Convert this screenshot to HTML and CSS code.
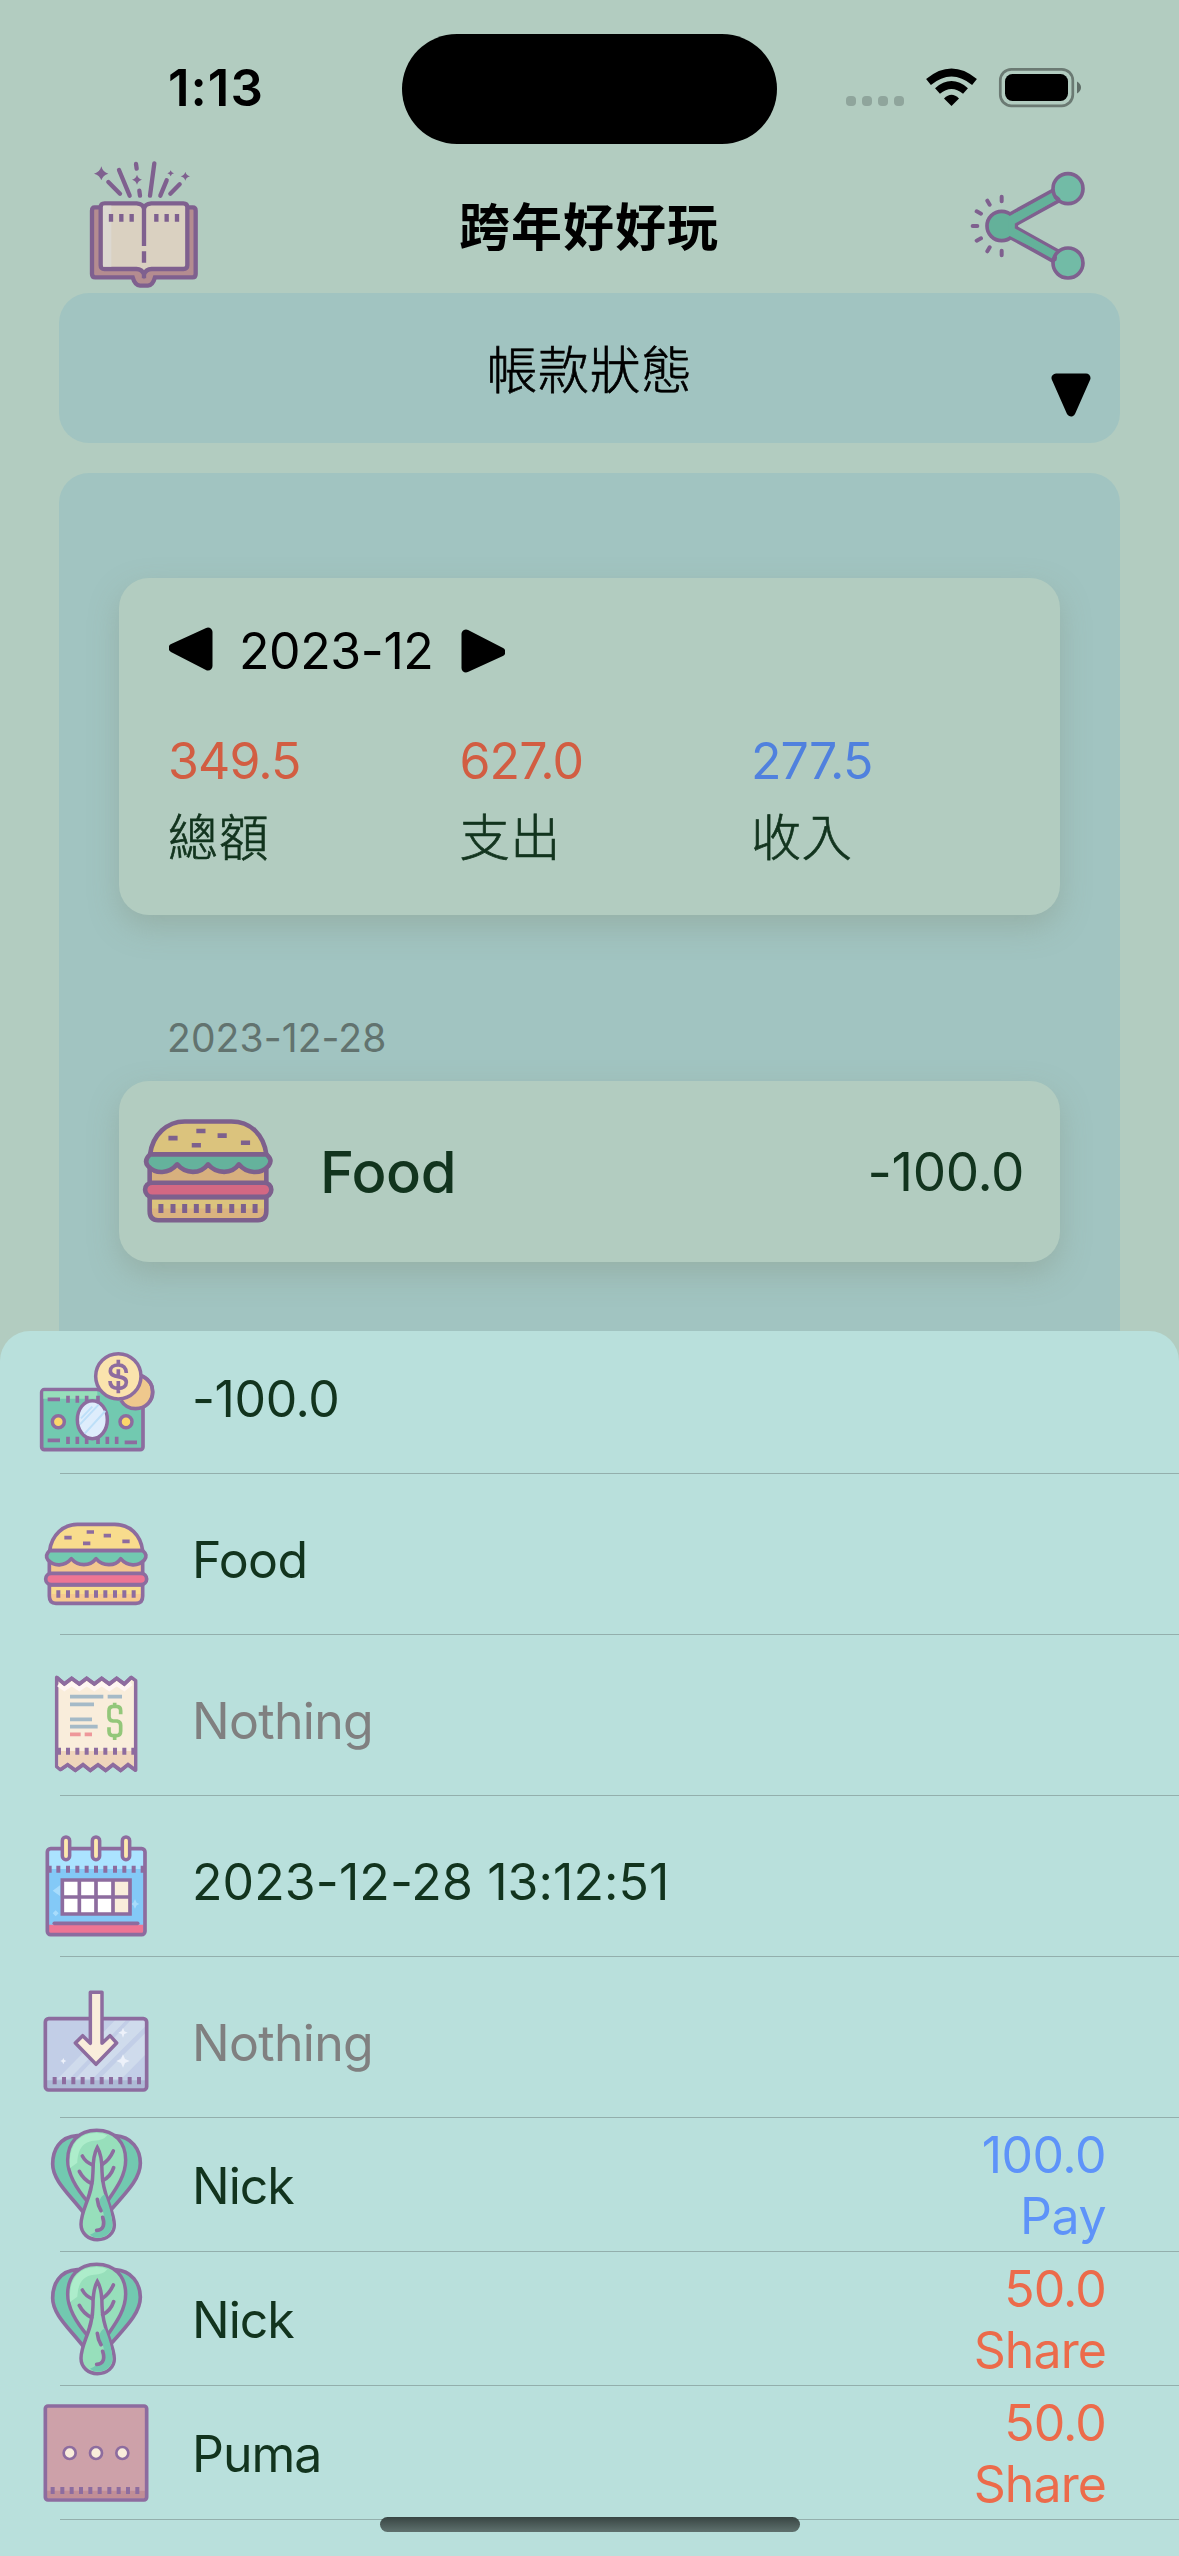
FILE: index.html
```html
<!DOCTYPE html>
<html lang="zh-Hant">
<head>
<meta charset="utf-8">
<title>跨年好好玩</title>
<link rel="stylesheet" href="styles.css">
</head>
<body>
<svg class="defs" aria-hidden="true">
  <symbol id="burger" viewBox="48 522 360 360">
    <path class="bun" d="M89 662C95 615 130 583 172 583H284C330 583 362 615 368 662Z"/>
    <path class="bread" d="M88 690H368V730H88Z"/>
    <path class="bread2" d="M88 765H368V798Q368 820 348 820H108Q88 820 88 798Z"/>
    <path class="bun" d="M94 769H363V792H94Z" stroke="none"/>
    <path class="line" d="M88 765H368V798Q368 820 348 820H108Q88 820 88 798ZM88 690V730M368 690V730"/>
    <path class="leaf" d="M89 662H368Q385 675 373 690C355 710 322 710 302 686C286 710 248 710 228 686C210 710 174 710 154 686C134 710 102 710 84 690Q73 677 89 662Z"/>
    <rect class="patty" x="77" y="730" width="303" height="34" rx="17"/>
    <path class="line" d="M133 623H155M200 606H222M251 617H273M189 640H211M307 634H329"/>
    <path class="line ticks" d="M115 781V803M144 781V803M172 781V803M200 781V803M228 781V803M256 781V803M285 781V803M313 781V803M341 781V803"/>
  </symbol>
  <symbol id="bokchoy" viewBox="48 495 360 360">
    <path class="leaf" d="M172 527C118 530 98 572 98 612C98 660 145 700 190 757L232 800L270 753C316 700 361 658 361 610C361 568 335 530 285 527Z"/>
    <path class="mint" d="M230 511C175 511 143 548 143 600C143 645 172 690 207 730H258C285 690 317 650 317 600C317 548 285 511 230 511Z"/>
    <path class="shine" d="M150 624C146 570 164 520 230 519Q248 519 262 526Q250 542 222 542C180 546 174 580 172 608Z"/>
    <path class="mint" d="M232 562C222 580 219 604 219 634C219 710 183 745 183 793C183 820 205 839 232 839C261 839 283 820 283 795C283 748 246 708 246 634C246 604 243 580 232 562Z"/>
    <path class="teal" d="M254 703Q225 720 250 758Q262 800 210 824Q220 834 235 833C260 833 277 815 277 795C277 765 265 730 254 703Z"/>
    <path class="line round" d="M187 588Q197 607 217 614M178 634Q190 658 215 671M280 573Q268 600 247 613M281 623Q272 650 248 662M232 718Q234 738 243 752M248 772C254 790 253 810 230 811"/>
  </symbol>
</svg>

<div class="screen">
  <header class="status">
    <span class="time">1:13</span>
    <span class="island"></span>
    <svg class="indicators" viewBox="0 0 240 42" width="240" height="42">
      <g fill="#8fa59c"><rect x="0" y="29" width="10" height="10" rx="4"/><rect x="16" y="29" width="10" height="10" rx="4"/><rect x="32" y="29" width="10" height="10" rx="4"/><rect x="48" y="29" width="10" height="10" rx="4"/></g>
      <g fill="none" stroke="#000" stroke-width="7.500"><path d="M82.500 15Q105.500 -4 128.500 15"/><path d="M91.500 24Q105.500 12 119.500 24"/></g>
      <path d="M98 31.500Q105.500 24 113 31.500L105.500 39Z"/>
      <rect x="154.300" y="2.300" width="72.500" height="36.500" rx="11" fill="none" stroke="#6b7a73" stroke-width="2.700"/>
      <rect x="159" y="7" width="63" height="27" rx="7.500"/>
      <path d="M231 14.500Q235 17 235 20.500T231 26.500Z" fill="#5f6d67"/>
    </svg>
  </header>

  <nav class="navbar">
    <svg class="book" viewBox="0 0 540 480" width="180" height="160">
      <path class="cover" d="M122 202H104Q96 202 96 212V402Q96 412 106 412H218Q225 436 240 437H264Q278 436 285 412H398Q407 412 407 402V212Q407 202 398 202H382Z"/>
      <path class="page" d="M122 202Q122 190 134 190H230Q250 192 252 206Q254 192 274 190H370Q382 190 382 202V376Q382 387 370 387H275Q258 388 252 402Q246 388 229 387H134Q122 387 122 376Z"/>
      <path d="M129 197H154V380H129Z" fill="#dcd8d1"/>
      <path class="line" d="M252 206V318M252 334V368M252 395V415"/>
      <path class="line ticks" d="M153 222V245M184 222V245M215 222V245M289 222V245M320 222V245M351 222V245"/>
      <path class="line round" d="M145 126L180 161M177 90L209 167M228 72L230 86M283 70L270 167M238 152L240 167M320 121L301 167M359 133L331 161"/>
      <path class="spark" d="M124 79Q128 96 145 101Q128 106 124 121Q120 106 102 101Q120 96 124 79ZM231 104Q234 116 246 119Q234 122 231 134Q228 122 216 119Q228 116 231 104ZM332 91Q334 98 342 100Q334 102 332 109Q330 102 322 100Q330 98 332 91ZM376 95Q379 106 390 109Q379 112 376 122Q373 112 362 109Q373 106 376 95Z"/>
    </svg>
    <h1 class="title">跨年好好玩</h1>
    <svg class="share" viewBox="420 360 420 390" width="140" height="130">
      <path class="link" d="M570 522L700 450L718 482L588 553V563L720 636L700 664L570 592Z"/>
      <circle class="node" cx="545" cy="558" r="44"/>
      <path fill="#64b19a" d="M565 530L700 459L712 478L584 551V565L712 637L704 655L565 586Z"/>
      <circle class="node2" cx="744" cy="446" r="45"/><circle class="node2" cx="744" cy="669" r="45"/>
      <path class="line round" d="M545 470V484M502 482L509 494M470 514L483 521M458 558H472M470 602L483 595M502 634L509 622M545 632V646M708 472L715 478M705 652L704 658"/>
    </svg>
  </nav>

  <main class="page-body">
    <section class="selector">
      <span class="selector-name">帳款狀態</span>
      <svg class="caret" viewBox="0 0 40 44" width="40" height="44"><path class="tri" d="M5 5H35L20 39Z"/></svg>
    </section>
    <section class="ledger">
      <article class="summary">
        <div class="month">
          <svg class="prev" viewBox="0 0 44 44" width="44" height="44"><path class="tri" d="M39 5V39L4 21Z"/></svg>
          <span class="month-name">2023-12</span>
          <svg class="next" viewBox="0 0 44 44" width="44" height="44"><path class="tri" d="M5 5V39L40 23Z"/></svg>
        </div>
        <div class="totals">
          <div><b class="out">349.5</b><span>總額</span></div>
          <div><b class="out">627.0</b><span>支出</span></div>
          <div><b class="in">277.5</b><span>收入</span></div>
        </div>
      </article>
      <div class="date">2023-12-28</div>
      <article class="entry">
        <svg class="entry-icon" width="150" height="150"><use href="#burger"/></svg>
        <span class="entry-name">Food</span>
        <span class="entry-amount">-100.0</span>
      </article>
    </section>
  </main>

  <section class="sheet">
    <div class="row first">
      <svg class="icon" viewBox="48 39 360 360">
        <circle cx="347" cy="185" r="51" fill="#efc88d" stroke="#8d6c9f" stroke-width="10.500"/>
        <rect class="leaf" x="65" y="179" width="304" height="180" rx="8"/>
        <path d="M70 184H232V206H70Z" fill="#97dfbb"/>
        <path class="line" d="M83 208H120M83 331H120M314 337H351M144 197V218M172 197V218M200 197V214M234 197V214M144 320V342M172 320V342M200 320V342M234 320V342M262 320V342M290 320V342"/>
        <path d="M300 205Q320 234 347 234Q370 234 386 216L370 140Z" fill="#efc88d"/>
        <path class="line" d="M303 211Q318 236 347 236C378 236 398 212 398 186C398 162 385 147 367 139"/>
        <ellipse cx="217" cy="269" rx="45" ry="57" fill="#deedfc" stroke="#8d6c9f" stroke-width="10.500"/>
        <path d="M180 283L236 224M194 311L256 243M183 265L217 230" fill="none" stroke="#bddff8" stroke-width="6"/>
        <circle cx="115" cy="275" r="18" fill="#fbd76b" stroke="#8d6c9f" stroke-width="10.500"/>
        <circle cx="318" cy="275" r="18" fill="#fbd76b" stroke="#8d6c9f" stroke-width="10.500"/>
        <circle cx="295" cy="139" r="68" fill="#fae3ad" stroke="#8d6c9f" stroke-width="10.500"/>
        <path class="line" d="M319 129C318 112 308 105 295 105C280 105 271 113 271 123C271 148 319 132 319 157C319 168 309 175 295 175C280 175 270 168 270 153M295 89V105M295 118V142M295 153V190"/>
      </svg>
      <span class="label amount">-100.0</span>
    </div>
    <div class="row"><svg class="icon"><use href="#burger"/></svg><span class="label">Food</span></div>
    <div class="row">
      <svg class="icon" viewBox="48 45 360 360">
        <path d="M110 82L133 102L155 85L178 102L200 85L223 102L245 85L268 102L290 85L313 102L334 82L347 92V361L324 344L302 361L279 344L257 361L234 344L211 361L189 344L166 361L143 344L121 359L110 350Z" fill="#f9eddb" stroke="#8d6c9f" stroke-width="10.500" stroke-linejoin="round"/>
        <path d="M115 303H342V353L324 339L302 355L279 339L257 355L234 339L211 355L189 339L166 355L143 339L121 353L115 347Z" fill="#efd5bb"/>
        <path d="M115 104L133 117L155 102L178 117L200 102L223 117L245 102L268 117L290 102L313 117L334 100" fill="none" stroke="#fff6f2" stroke-width="12"/>
        <path d="M110 82L133 102L155 85L178 102L200 85L223 102L245 85L268 102L290 85L313 102L334 82M121 359L143 344L166 361L189 344L211 361L234 344L257 361L279 344L302 361L324 344L347 361" class="line"/>
        <path d="M150 140H250M263 140H306M150 163H222M150 208H216M150 230H233" fill="none" stroke="#a5bac7" stroke-width="11"/>
        <path d="M150 253H182M194 253H216" stroke="#ee979a" stroke-width="11"/>
        <path d="M302 193V182Q302 169 289 169H280Q267 169 267 182V200Q267 211 279 213H291Q302 215 302 226V243Q302 257 289 257H280Q267 257 267 243V232M284 158V169M284 257V270" fill="none" stroke="#93c77a" stroke-width="11"/>
        <path class="line ticks" d="M117 293V314M144 293V314M172 293V314M200 293V314M228 293V314M256 293V314M285 293V314M313 293V314M340 293V314"/>
      </svg>
      <span class="label muted">Nothing</span>
    </div>
    <div class="row">
      <svg class="icon" viewBox="48 528 360 360">
        <rect x="82" y="596" width="293" height="258" rx="10" fill="#83c9f7"/>
        <path d="M86 600H371V657H86Z" fill="#abe3ff"/>
        <path d="M86 824H371V852H86Z" fill="#ee7594"/>
        <path d="M98 722L120 706V738ZM345 748L350 758L358 762L350 766L345 776L340 766L332 762L340 758ZM107 781L116 790L107 799L98 790Z" fill="#a8dcfc"/>
        <rect class="line" x="82" y="596" width="293" height="258" rx="10"/>
        <path class="line round" d="M103 820H353"/>
        <rect x="127" y="690" width="203" height="102" fill="#fff"/>
        <path d="M280 690H330V792H280Z" fill="#f9eddb"/>
        <path class="line" d="M127 690H330V792H127ZM127 741H330M178 690V792M228 690V792M279 690V792"/>
        <path class="line ticks" d="M89 647V668M115 647V668M144 647V668M172 647V668M200 647V668M228 647V668M256 647V668M285 647V668M313 647V668M341 647V668M368 647V668"/>
        <g fill="#fde9ad" stroke="#8d6c9f" stroke-width="10.500"><rect x="127" y="561" width="22" height="68" rx="11"/><rect x="217" y="561" width="22" height="68" rx="11"/><rect x="307" y="561" width="22" height="68" rx="11"/></g>
      </svg>
      <span class="label timestamp">2023-12-28 13:12:51</span>
    </div>
    <div class="row">
      <svg class="icon" viewBox="48 81 360 360">
        <rect x="76" y="176" width="304" height="214" rx="10" fill="#c2cee7"/>
        <path d="M285 181H318L148 357H112ZM332 181H375V200L217 357H166ZM375 220V285L304 357H238Z" fill="#cfdbec"/>
        <path d="M81 361H375V386H81Z" fill="#adbbd6"/>
        <path d="M309 203L313 214L323 218L313 222L309 233L305 222L295 218L305 214ZM309 283L315 297L329 303L315 309L309 323L303 309L289 303L303 297ZM130 294L133 300L139 303L133 306L130 313L127 306L121 303L127 300Z" fill="#edf1fa"/>
        <rect class="line" x="76" y="176" width="304" height="214" rx="10"/>
        <path class="line ticks" d="M104 351V373M132 351V373M160 351V373M188 351V373M217 351V373M245 351V373M273 351V373M301 351V373M329 351V373M357 351V373"/>
        <path d="M211 97H246V250L270 227L290 249L228 313L166 249L188 227L211 250Z" fill="#f9eddb" stroke="#8d6c9f" stroke-width="10.500" stroke-linejoin="round"/>
      </svg>
      <span class="label muted">Nothing</span>
    </div>
    <div class="row person">
      <svg class="icon"><use href="#bokchoy"/></svg><span class="label">Nick</span>
      <span class="share-amount in">100.0<br>Pay</span>
    </div>
    <div class="row person">
      <svg class="icon"><use href="#bokchoy"/></svg><span class="label">Nick</span>
      <span class="share-amount out">50.0<br>Share</span>
    </div>
    <div class="row person">
      <svg class="icon" viewBox="48 459 360 360">
        <rect x="76" y="498" width="304" height="282" rx="8" fill="#cda1a9"/>
        <path d="M81 752H375V775H81Z" fill="#c18e96"/>
        <rect class="line" x="76" y="498" width="304" height="282" rx="8"/>
        <g fill="#f9eddb" stroke="#8d6c9f" stroke-width="8"><circle cx="149" cy="639" r="18"/><circle cx="228" cy="639" r="18"/><circle cx="307" cy="639" r="18"/></g>
        <path class="line ticks" d="M98 741V762M127 741V762M155 741V762M183 741V762M211 741V762M239 741V762M268 741V762M296 741V762M324 741V762M352 741V762"/>
      </svg>
      <span class="label">Puma</span>
      <span class="share-amount out">50.0<br>Share</span>
    </div>
    <div class="home-indicator"></div>
  </section>
</div>
</body>
</html>
```
FILE: styles.css
```css
* { box-sizing: border-box; }
body {
  margin: 0;
  background: #b2ccc0;
  font-family: Inter, "Noto Sans CJK TC", sans-serif;
  font-size: 50px;
  color: #12341e;
}
.defs { position: absolute; width: 0; height: 0; }
.screen { width: 1179px; height: 2556px; display: flex; flex-direction: column; overflow: hidden; }

.line { fill: none; stroke: #8d6c9f; stroke-width: 11; }
.round { stroke-linecap: round; }
.ticks { stroke-width: 12; }
.bun { fill: #f8dc8d; stroke: #8d6c9f; stroke-width: 11; }
.bun[stroke="none"] { stroke: none; }
.bread { fill: #f3c78e; }
.bread2 { fill: #f7ca8f; }
.leaf { fill: #72c9b0; stroke: #8d6c9f; stroke-width: 11; stroke-linejoin: round; }
.patty { fill: #ee7594; stroke: #8d6c9f; stroke-width: 11; }
.mint { fill: #97dfbb; stroke: #8d6c9f; stroke-width: 10.5; }
.shine { fill: #adedcb; }
.teal { fill: #72c9b0; }
.tri { fill: #000; stroke: #000; stroke-width: 9; stroke-linejoin: round; }

.status { display: flex; height: 140px; flex: none; }
.time { width: 402px; padding: 57px 0 0 168px; font-size: 51px; line-height: 62px; font-weight: 600; color: #000; letter-spacing: 1px; }
.island { width: 375px; height: 110px; margin-top: 34px; border-radius: 55px; background: #000; flex: none; }
.indicators { margin: 67px 0 0 69px; }

.navbar { display: flex; justify-content: space-between; align-items: flex-start; height: 153px; flex: none; padding: 0 79px 0 60px; }
.navbar .line { stroke: #7f608f; stroke-width: 13; }
.navbar .share .line { stroke-width: 12; }
.navbar svg { position: relative; z-index: 1; flex: none; }
.cover { fill: #b48c90; stroke: #7f608f; stroke-width: 13; }
.page { fill: #dad1c1; stroke: #7f608f; stroke-width: 13; }
.spark { fill: #7f608f; }
.title { margin: 51px 22px 0 0; font-size: 51px; line-height: 74px; font-weight: 700; color: #000; letter-spacing: 1px; }
.share { margin-top: 20px; }
.link { fill: #64b19a; stroke: #7f608f; stroke-width: 11; stroke-linejoin: round; }
.node { fill: #64b19a; stroke: #7f608f; stroke-width: 11; }
.node2 { fill: #72bba6; stroke: #7f608f; stroke-width: 11; }

.page-body { display: flex; flex-direction: column; gap: 30px; height: 1038px; flex: none; padding: 0 59px; }
.selector { position: relative; height: 150px; flex: none; display: flex; justify-content: center; align-items: center; border-radius: 30px; background: #a1c4c1; color: #000; font-size: 51px; }
.selector-name { padding-bottom: 3px; font-weight: 300; letter-spacing: .5px; -webkit-text-stroke: .7px currentColor; }
.caret { position: absolute; right: 29px; top: 80px; }
.ledger { height: 900px; flex: none; padding: 105px 60px 0; border-radius: 30px; background: #a1c4c1; }
.summary, .entry { border-radius: 30px; background: #b2ccc0; box-shadow: 0 12px 30px rgba(130, 140, 120, .35); }
.summary { height: 337px; padding: 49px 50px 0; }
.month { display: flex; color: #000; height: 46px; }
.month-name { width: 204px; margin: 1px 12px 0 26px; line-height: 46px; letter-spacing: -.4px; white-space: nowrap; }
.next { margin-top: 2px; margin-left: 6px; }
.totals { display: grid; grid-template-columns: repeat(3, 291.5px); margin: 57px 0 0 -1px; width: 840px; }
.totals div { display: flex; flex-direction: column; }
.totals b { font-weight: 400; line-height: 62px; letter-spacing: -.9px; }
.totals span { line-height: 74px; margin-top: 9px; font-weight: 300; letter-spacing: .7px; -webkit-text-stroke: .7px currentColor; }
.totals .out { color: #d25d42; }
.totals .in { color: #5081de; }
.date { margin: 98px 0 0 48px; height: 68px; line-height: 49px; font-size: 39px; color: #62736f; letter-spacing: .1px; }
.entry { height: 181px; display: flex; align-items: center; padding: 0 36px 0 14px; }
.entry-icon { flex: none; filter: brightness(.885); margin-top: -2px; }
.entry-name { margin-left: 37px; font-size: 58px; font-weight: 500; letter-spacing: -.5px; }
.entry-amount { margin-left: auto; font-size: 53px; letter-spacing: -.4px; }

.sheet { position: relative; flex: 1; border-radius: 30px 30px 0 0; background: #b9e0dc; }
.row { position: relative; display: flex; height: 161px; padding: 30px 72px 0 36px; }
.row::after { content: ""; position: absolute; left: 60px; right: 0; bottom: 0; height: 1px; background: #93afac; }
.row.first { height: 143px; padding-top: 12px; }
.icon { width: 120px; height: 120px; flex: none; }
.label { margin-left: 36px; line-height: 112px; letter-spacing: -.7px; }
.label.amount { letter-spacing: -.4px; }
.label.timestamp { letter-spacing: .1px; }
.muted { color: #808080; }
.person { height: 134px; padding-top: 7px; }
.person .label { line-height: 122px; letter-spacing: -1px; }
.share-amount { margin: 0 1px 0 auto; text-align: right; line-height: 61px; letter-spacing: -.9px; }
.share-amount.in { color: #5e93f9; letter-spacing: -.5px; }
.share-amount.out { color: #ec6b4b; }
.home-indicator { position: absolute; left: 380px; bottom: 24px; width: 420px; height: 15px; border-radius: 8px; background: linear-gradient(#384543, #5f716e); }
```
